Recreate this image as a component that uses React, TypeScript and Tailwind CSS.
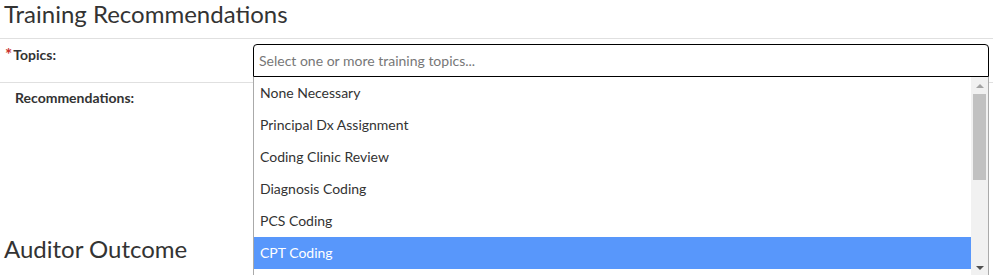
import React from "react";

const items = [
  "None Necessary",
  "Principal Dx Assignment",
  "Coding Clinic Review",
  "Diagnosis Coding",
  "PCS Coding",
  "CPT Coding",
];

export default function App() {
  return (
    <div className="w-[998px] h-[275px] overflow-hidden bg-white font-['Lato','Noto_Sans',sans-serif] text-[#333]">
      <div className="mr-[5px]">
        <h2 className="h-[39px] border-b border-[#e0e0e0] pl-[4px] text-[24px] leading-[28px] font-normal">
          Training Recommendations
        </h2>
        <div className="flex h-[44px] border-b border-[#e0e0e0]">
          <div className="w-[253px] shrink-0 pl-[5px] pt-[6px] text-[14px] leading-[17px] font-bold">
            <span className="relative top-[1px] mr-[1px] text-[17px] leading-none text-[#c9302c]">*</span>Topics:
          </div>
          <div className="relative flex-1 pt-[5px] pr-[4px]">
            <div className="h-[33px] rounded-t-[4px] border border-black pl-[5px] text-[14px] leading-[31px] text-[#777]">
              Select one or more training topics...
            </div>
            <div className="absolute left-0 right-[4px] top-[38px] z-10 flex h-[200px] border-x border-[#aaa] bg-white">
              <ul className="flex-1 overflow-hidden">
                {items.map((t) => (
                  <li
                    key={t}
                    className={
                      t === "CPT Coding"
                        ? "h-[32px] pl-[6px] text-[14px] leading-[31px] bg-[#5897fb] text-white"
                        : "h-[32px] pl-[6px] text-[14px] leading-[31px] text-[#333]"
                    }
                  >
                    {t}
                  </li>
                ))}
              </ul>
              <div className="flex w-[17px] flex-col bg-[#f1f1f1]">
                <div className="flex h-[17px] items-center justify-center">
                  <div className="h-0 w-0 border-x-[4px] border-b-[4px] border-x-transparent border-b-[#a3a3a3]" />
                </div>
                <div className="mx-[2px] h-[86px] bg-[#c1c1c1]" />
                <div className="flex-1" />
                <div className="flex h-[15px] items-start justify-center pt-[4px]">
                  <div className="h-0 w-0 border-x-[4px] border-t-[4px] border-x-transparent border-t-[#505050]" />
                </div>
              </div>
            </div>
          </div>
        </div>
        <div className="h-[154px] pl-[15px] pt-[6px] text-[14px] leading-[17px] font-bold">
          Recommendations:
        </div>
        <h2 className="pl-[4px] text-[24px] leading-[24px] font-normal">Auditor Outcome</h2>
      </div>
    </div>
  );
}
